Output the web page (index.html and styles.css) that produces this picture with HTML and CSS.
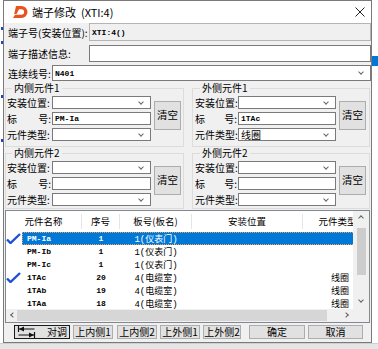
FILE: index.html
```html
<!DOCTYPE html>
<html lang="zh">

<head>
    <meta charset="UTF-8" />
    <meta name="viewport" content="width=device-width, initial-scale=1.0" />
    <title>端子修改</title>
    <link rel="stylesheet" href="styles.css">
</head>

<body>

    <div class="desk">
        <div class="gutter-left">
            <i class="handle h1"></i>
            <i class="handle h2"></i>
            <i class="handle h3"></i>
            <i class="handle h4"></i>
        </div>

        <div class="window">
            <div class="titlebar">
                <svg class="logo" width="17" height="16" viewBox="0 0 17 16">
                    <path fill="#e8541e" d="M4 2h5.5a6 6 0 0 1 0 12H1l2-3.2h6.3a2.8 2.8 0 0 0 0-5.6H7L4.6 10H2.2z"/>
                </svg>
                <span class="title">端子修改&nbsp; (XTI:4)</span>
                <svg class="close" width="10" height="10" viewBox="0 0 10 10">
                    <path d="M0.5 0.5l9 9M9.5 0.5l-9 9" stroke="#222" stroke-width="1"/>
                </svg>
            </div>

            <div class="content">
                <div class="field row-1">
                    <label class="lbl-long">端子号(安装位置):</label>
                    <div class="input disabled mono">XTI:4()</div>
                </div>
                <div class="field row-2">
                    <label class="lbl-long">端子描述信息:</label>
                    <div class="input"></div>
                </div>
                <div class="field row-3">
                    <label class="lbl-short">连续线号:</label>
                    <div class="input select mono">N401</div>
                </div>

                <div class="groups">
                    <fieldset class="group">
                        <legend>内侧元件1</legend>
                        <div class="group-grid">
                            <label>安装位置:</label>
                            <div class="input select"></div>
                            <button class="btn clear">清空</button>
                            <label class="spread"><span>标</span><span>号:</span></label>
                            <div class="input mono">PM-Ia</div>
                            <label>元件类型:</label>
                            <div class="input select"></div>
                        </div>
                    </fieldset>

                    <fieldset class="group right">
                        <legend>外侧元件1</legend>
                        <div class="group-grid">
                            <label>安装位置:</label>
                            <div class="input select"></div>
                            <button class="btn clear">清空</button>
                            <label class="spread"><span>标</span><span>号:</span></label>
                            <div class="input mono">1TAc</div>
                            <label>元件类型:</label>
                            <div class="input select">线圈</div>
                        </div>
                    </fieldset>

                    <fieldset class="group second">
                        <legend>内侧元件2</legend>
                        <div class="group-grid">
                            <label>安装位置:</label>
                            <div class="input select"></div>
                            <button class="btn clear">清空</button>
                            <label class="spread"><span>标</span><span>号:</span></label>
                            <div class="input"></div>
                            <label>元件类型:</label>
                            <div class="input select"></div>
                        </div>
                    </fieldset>

                    <fieldset class="group right second">
                        <legend>外侧元件2</legend>
                        <div class="group-grid">
                            <label>安装位置:</label>
                            <div class="input select"></div>
                            <button class="btn clear">清空</button>
                            <label class="spread"><span>标</span><span>号:</span></label>
                            <div class="input"></div>
                            <label>元件类型:</label>
                            <div class="input select"></div>
                        </div>
                    </fieldset>
                </div>

                <div class="list">
                    <div class="list-main">
                        <div class="list-head">
                            <span>元件名称</span>
                            <span>序号</span>
                            <span>板号(板名)</span>
                            <span>安装位置</span>
                            <span>元件类型</span>
                        </div>

                        <div class="list-row">
                            <span class="chk"><svg width="15" height="11" viewBox="0 0 15 11"><path d="M1 6.5l3.5 3.5L14 1" fill="none" stroke="#1f4fd6" stroke-width="2.4"/></svg></span>
                            <div class="cells selected">
                                <span class="c-name">PM-Ia</span><span class="c-num">1</span><span class="c-board">1(仪表门)</span><span></span><span class="c-type"></span>
                            </div>
                        </div>
                        <div class="list-row">
                            <span class="chk"></span>
                            <div class="cells">
                                <span class="c-name">PM-Ib</span><span class="c-num">1</span><span class="c-board">1(仪表门)</span><span></span><span class="c-type"></span>
                            </div>
                        </div>
                        <div class="list-row">
                            <span class="chk"></span>
                            <div class="cells">
                                <span class="c-name">PM-Ic</span><span class="c-num">1</span><span class="c-board">1(仪表门)</span><span></span><span class="c-type"></span>
                            </div>
                        </div>
                        <div class="list-row">
                            <span class="chk"><svg width="15" height="11" viewBox="0 0 15 11"><path d="M1 6.5l3.5 3.5L14 1" fill="none" stroke="#1f4fd6" stroke-width="2.4"/></svg></span>
                            <div class="cells">
                                <span class="c-name">1TAc</span><span class="c-num">20</span><span class="c-board">4(电缆室)</span><span></span><span class="c-type">线圈</span>
                            </div>
                        </div>
                        <div class="list-row">
                            <span class="chk"></span>
                            <div class="cells">
                                <span class="c-name">1TAb</span><span class="c-num">19</span><span class="c-board">4(电缆室)</span><span></span><span class="c-type">线圈</span>
                            </div>
                        </div>
                        <div class="list-row">
                            <span class="chk"></span>
                            <div class="cells">
                                <span class="c-name">1TAa</span><span class="c-num">18</span><span class="c-board">4(电缆室)</span><span></span><span class="c-type">线圈</span>
                            </div>
                        </div>
                    </div>

                    <div class="vscroll">
                        <span class="arrow up"></span>
                        <span class="vthumb"></span>
                        <span class="arrow down"></span>
                    </div>
                    <div class="hscroll">
                        <span class="arrow left"></span>
                        <span class="hthumb"></span>
                        <span class="arrow right"></span>
                    </div>
                    <div class="corner"></div>
                </div>

                <div class="actions">
                    <button class="btn swap">
                        <svg width="19" height="12" viewBox="0 0 19 12">
                            <path d="M1.5 0v6M1.5 3H17.5M17.5 6v6M1.5 9H17.5" stroke="#111" stroke-width="1.2" fill="none"/>
                            <path d="M2 3l5-2.6v5.2zM17 9l-5-2.6v5.2z" fill="#111"/>
                        </svg>
                        <span>对调</span>
                    </button>
                    <button class="btn w40">上内侧1</button>
                    <button class="btn w40">上内侧2</button>
                    <button class="btn w40">上外侧1</button>
                    <button class="btn w38">上外侧2</button>
                    <button class="btn ok">确定</button>
                    <button class="btn cancel">取消</button>
                </div>
            </div>
        </div>

        <div class="gutter-right">
            <i class="blue-strip"></i>
        </div>
    </div>

    <div class="statusbar"></div>

</body>

</html>
```

FILE: styles.css
```css
body {
    margin: 0;
    width: 378px;
    height: 349px;
    overflow: hidden;
    font-family: "Noto Sans CJK SC", "Noto Sans", sans-serif;
    font-size: 10px;
    color: #000;
    background-color: #fff;
}

.desk {
    display: flex;
    height: 343px;
}

.gutter-left {
    width: 3px;
    position: relative;
}

.handle {
    position: absolute;
    left: 1px;
    width: 2px;
    height: 3px;
    background: #1d3fd8;
}

.h1 { top: 27px; }
.h2 { top: 41px; }
.h3 { top: 95px; }
.h4 { top: 139px; }

.gutter-right {
    width: 6px;
    position: relative;
    overflow: hidden;
    background: #fff;
}

.blue-strip {
    position: absolute;
    top: 56px;
    left: 0;
    width: 6px;
    height: 10px;
    background: #0078d7;
}

.statusbar {
    height: 6px;
    background: #e6e6e6;
    border-top: 1px solid #cfcfcf;
}

/* Window */

.window {
    width: 369px;
    height: 343px;
    box-sizing: border-box;
    border: 1px solid #7a7a7a;
    background: #f0f0f0;
    display: flex;
    flex-direction: column;
}

.titlebar {
    height: 22px;
    flex: none;
    display: flex;
    align-items: center;
    padding-left: 8px;
    background: #fff;
}

.logo {
    margin-right: 3px;
}

.title {
    font-size: 11px;
}

.close {
    margin-left: auto;
    margin-right: 6px;
}

.content {
    display: flex;
    flex-direction: column;
}

/* Top fields */

.field {
    display: flex;
    align-items: center;
    padding-left: 4px;
}

.row-1 {
    height: 18px;
}

.row-2 {
    height: 17px;
    margin-top: 4px;
}

.row-3 {
    height: 16px;
    margin-top: 3px;
}

.lbl-long {
    width: 81px;
    white-space: nowrap;
}

.lbl-short {
    width: 44px;
    white-space: nowrap;
}

.input {
    flex: 1;
    height: 100%;
    box-sizing: border-box;
    border: 1px solid #7a7a7a;
    background: #fff;
    position: relative;
    padding-left: 2px;
    display: flex;
    align-items: center;
    white-space: nowrap;
    overflow: hidden;
    font-size: 10px;
}

.input.disabled {
    background: #f0f0f0;
    border-color: #b4b4b4;
}

.mono {
    font-family: "Liberation Mono", "Noto Sans CJK SC", monospace;
    font-size: 8px;
    font-weight: bold;
}

.select::after {
    content: "";
    position: absolute;
    right: 7px;
    top: 50%;
    width: 3px;
    height: 3px;
    margin-top: -3px;
    border-right: 1px solid #666;
    border-bottom: 1px solid #666;
    transform: rotate(45deg);
}

/* Groups */

.groups {
    display: grid;
    grid-template-columns: 179px 178px;
    column-gap: 8px;
    padding-left: 1px;
    margin-top: 1px;
}

.group {
    margin: 0;
    min-width: 0;
    box-sizing: border-box;
    padding: 2px 2px 5px 1px;
    border: 1px solid #dcdcdc;
}

.group.second {
    padding-bottom: 2px;
}

.group.right {
    padding: 2px 3px 5px 2px;
}

.group.right.second {
    padding-bottom: 2px;
}

.group legend {
    margin-left: 5px;
    padding: 0 2px;
    line-height: 12px;
    font-size: 10px;
}

.group-grid {
    display: grid;
    grid-template-columns: 45px 99px 30px;
    grid-auto-rows: 13px;
    row-gap: 3px;
    align-items: center;
}

.group.right .group-grid {
    grid-template-columns: 43px 98px 30px;
}

.group-grid label {
    white-space: nowrap;
    line-height: 13px;
}

.group-grid .spread {
    display: flex;
    justify-content: space-between;
    padding-right: 1px;
}

.group-grid .input {
    height: 13px;
}

.btn {
    font-family: "Noto Sans CJK SC", "Noto Sans", sans-serif;
    font-size: 10px;
    color: #000;
    background: #e1e1e1;
    border: 1px solid #adadad;
    padding: 0;
    margin: 0;
    box-sizing: border-box;
    line-height: 1;
    white-space: nowrap;
}

.clear {
    grid-column: 3;
    grid-row: 1 / 4;
    justify-self: end;
    align-self: start;
    width: 27px;
    height: 29px;
    margin-top: 5px;
    font-size: 10.5px;
}

/* List */

.list {
    display: grid;
    grid-template-columns: 347px 16px;
    grid-template-rows: 98px 13px;
    margin: 1px 1px 0 1px;
    border: 1px solid #828790;
    background: #fff;
    overflow: hidden;
}

.list-main {
    overflow: hidden;
}

.list-head {
    display: grid;
    grid-template-columns: 76px 38px 72px 111px 70px;
    width: 367px;
    height: 21px;
    align-items: center;
    font-size: 9.5px;
}

.list-head span {
    text-align: center;
    border-right: 1px solid #e5e5e5;
    line-height: 15px;
    white-space: nowrap;
}

.list-row {
    display: flex;
    height: 13px;
    width: 367px;
}

.chk {
    width: 16px;
    flex: none;
    display: flex;
    align-items: center;
}

.cells {
    display: grid;
    grid-template-columns: 60px 38px 72px 111px 70px;
    flex: none;
    align-items: center;
    white-space: nowrap;
}

.cells.selected {
    background: #0078d7;
    color: #fff;
    outline: 1px dotted #f0a050;
    outline-offset: -1px;
}

.c-name,
.c-num {
    font-family: "Liberation Mono", monospace;
    font-size: 8px;
    font-weight: bold;
}

.c-name {
    padding-left: 5px;
}

.c-num {
    text-align: center;
}

.c-board,
.c-type {
    text-align: center;
    font-family: "Liberation Mono", "Noto Sans CJK SC", monospace;
    font-size: 9px;
}

.c-type {
    padding-left: 4px;
}

.vscroll {
    background: #f0f0f0;
    display: flex;
    flex-direction: column;
    align-items: center;
}

.vthumb {
    width: 9px;
    height: 47px;
    margin-top: 3px;
    background: #cdcdcd;
}

.hscroll {
    background: #f0f0f0;
    display: flex;
    align-items: center;
}

.hthumb {
    width: 310px;
    height: 11px;
    background: #d6d6d6;
    margin-right: auto;
}

.corner {
    background: #f0f0f0;
}

.arrow {
    flex: none;
    position: relative;
    display: block;
}

.arrow::before {
    content: "";
    position: absolute;
    width: 3px;
    height: 3px;
    border-left: 1px solid #606060;
    border-top: 1px solid #606060;
}

.arrow.up,
.arrow.down {
    width: 16px;
    height: 14px;
}

.arrow.up::before {
    left: 6px;
    top: 5px;
    transform: rotate(45deg);
}

.arrow.down {
    margin-top: auto;
}

.arrow.down::before {
    left: 6px;
    top: 3px;
    transform: rotate(225deg);
}

.arrow.left,
.arrow.right {
    width: 11px;
    height: 13px;
}

.arrow.left::before {
    left: 5px;
    top: 4px;
    transform: rotate(-45deg);
}

.arrow.right::before {
    left: 2px;
    top: 4px;
    transform: rotate(135deg);
}

/* Bottom buttons */

.actions {
    display: flex;
    padding: 2px 0 0 10px;
}

.actions .btn {
    height: 14px;
    margin-left: 3px;
}

.actions .swap {
    margin-left: 0;
    width: 56px;
    border: 1px solid #1a1a1a;
    display: flex;
    align-items: center;
    padding-left: 2px;
}

.swap span {
    margin-left: 11px;
}

.w40 {
    width: 40px;
}

.actions .w40 + .w40 {
    margin-left: 4px;
}

.actions .w40 + .w40 + .w40 {
    margin-left: 3px;
}

.w38 {
    width: 38px;
}

.actions .ok {
    width: 56px;
    margin-left: 8px;
}

.cancel {
    width: 55px;
}
```
